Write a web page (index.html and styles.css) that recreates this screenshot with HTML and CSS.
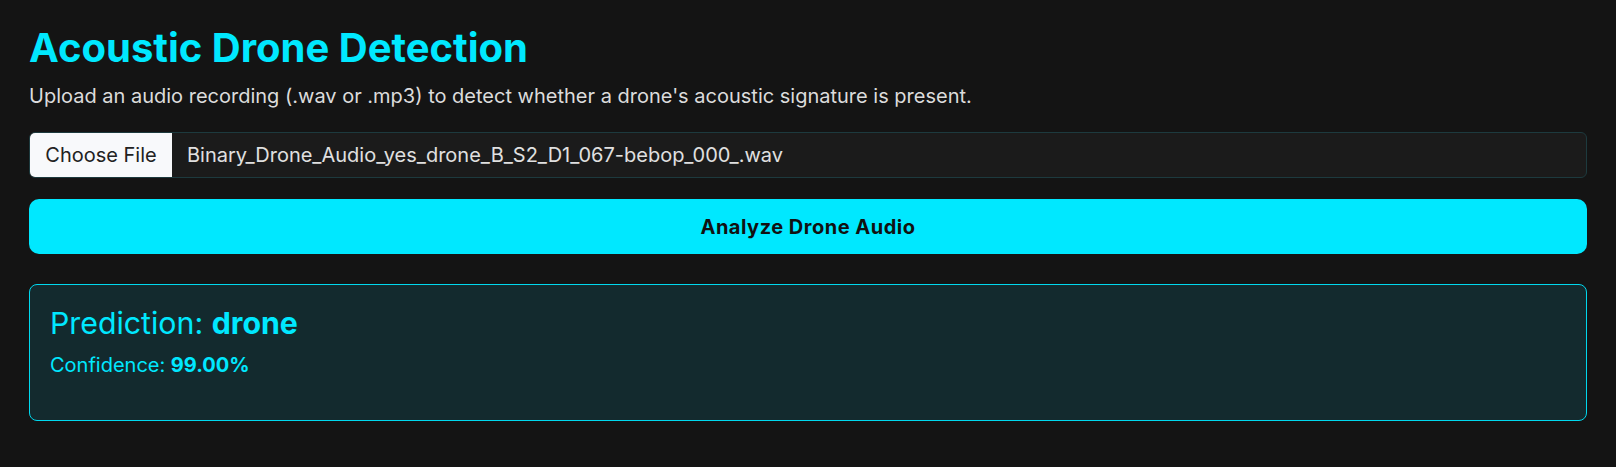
FILE: index.html
```html
<!DOCTYPE html>
<html lang="en">
<head>
<meta charset="utf-8">
<title>Acoustic Drone Detection</title>
<link rel="stylesheet" href="styles.css">
</head>
<body>
<main class="app">
  <h1 class="title">Acoustic Drone Detection</h1>
  <p class="subtitle">Upload an audio recording (.wav or .mp3) to detect whether a drone's acoustic signature is present.</p>
  <div class="file-input">
    <span class="file-button">Choose File</span>
    <span class="file-name">Binary_Drone_Audio_yes_drone_B_S2_D1_067-bebop_000_.wav</span>
  </div>
  <button class="analyze" type="button">Analyze Drone Audio</button>
  <section class="result">
    <h2 class="prediction">Prediction: <strong>drone</strong></h2>
    <p class="confidence">Confidence: <strong>99.00%</strong></p>
  </section>
</main>
</body>
</html>
```

FILE: styles.css
```css
html, body {
  margin: 0;
  padding: 0;
  background: #141414;
}

body {
  font-family: Inter, "Noto Sans", sans-serif;
  color: #e0e0e0;
}

.app {
  padding: 24px 29px 40px;
  display: flex;
  flex-direction: column;
}

.title {
  margin: 0;
  font-size: 40px;
  line-height: 48px;
  font-weight: 700;
  color: #00e8ff;
}

.subtitle {
  margin: 12px 0 0;
  font-size: 20px;
  line-height: 24px;
  color: #dcdcdc;
}

.file-input {
  margin-top: 24px;
  height: 46px;
  box-sizing: border-box;
  display: flex;
  align-items: stretch;
  background: #1b1b1b;
  border: 1px solid #1d3a3e;
  border-radius: 6px;
  overflow: hidden;
}

.file-button {
  display: flex;
  align-items: center;
  justify-content: center;
  background: #f8f9fb;
  color: #222;
  font-size: 20px;
  width: 142px;
  box-sizing: border-box;
}

.file-name {
  display: flex;
  align-items: center;
  padding-left: 15px;
  font-size: 20px;
  color: #e0e0e0;
}

.analyze {
  margin-top: 21px;
  height: 55px;
  border: none;
  border-radius: 10px;
  background: #00e8ff;
  color: #111;
  font-family: Inter, "Noto Sans", sans-serif;
  font-size: 20px;
  font-weight: 700;
  letter-spacing: 0.5px;
  cursor: pointer;
}

.result {
  margin-top: 30px;
  height: 137px;
  box-sizing: border-box;
  padding: 20px 20px;
  background: #132a2e;
  border: 1px solid #00d8ee;
  border-radius: 8px;
  color: #00e8ff;
}

.prediction {
  margin: 0;
  font-size: 30.3px;
  line-height: 36px;
  font-weight: 400;
}

.prediction strong,
.confidence strong {
  font-weight: 700;
}

.confidence {
  margin: 12px 0 0;
  font-size: 20px;
  line-height: 24px;
}
```
